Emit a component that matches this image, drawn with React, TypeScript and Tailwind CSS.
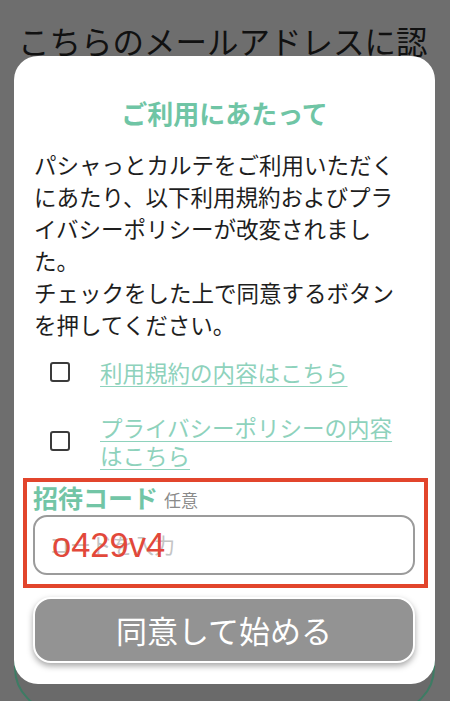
import React from "react";

const jp = { fontFamily: '"Noto Sans CJK JP", "Noto Sans", sans-serif' };

function CheckRow({ children, className = "" }: { children: React.ReactNode; className?: string }) {
  return (
    <div className={`flex items-center pr-4 ${className}`}>
      <div className="ml-4 h-5 w-5 shrink-0 rounded-[3px] border-2 border-[#3b3b3b] bg-white" />
      <a className="ml-[30px] text-[22.5px] leading-[28px] text-[#8ed2bc] underline decoration-1 underline-offset-[4px]">
        {children}
      </a>
    </div>
  );
}

export default function App() {
  return (
    <div className="relative h-[701px] w-[450px] overflow-hidden bg-[#6e6e6e]" style={jp}>
      {/* page behind the dialog */}
      <div className="px-[18px] pt-[20px] text-[31.5px] leading-[40px] text-[#111]">
        こちらのメールアドレスに認証コードを送信しました
      </div>
      <div className="absolute left-[14px] top-[600px] h-[112px] w-[421px] rounded-[44px] border-2 border-[#3d7c64] bg-[#6a6a6a]" />

      {/* dialog */}
      <div className="absolute left-[14px] top-[56px] flex h-[628px] w-[421px] flex-col rounded-[24px] bg-white px-5 pt-[41px]">
        <h2 className="text-center text-[26px] font-bold leading-[32px] text-[#6fc5a5]">ご利用にあたって</h2>

        <p className="mt-[19px] text-[22.5px] leading-[32px] text-[#1e1e1e]">
          パシャっとカルテをご利用いただくにあたり、以下利用規約およびプライバシーポリシーが改変されました。
          <br />
          チェックをした上で同意するボタンを押してください。
        </p>

        <CheckRow className="mt-[18px]">利用規約の内容はこちら</CheckRow>
        <CheckRow className="mt-[27px]">プライバシーポリシーの内容はこちら</CheckRow>

        <div className="mt-[14px] flex items-end">
          <span className="-ml-[1px] text-[25px] font-bold leading-[28px] text-[#72c5a6]">招待コード</span>
          <span className="mb-[1px] ml-[6px] text-[17px] leading-[20px] text-[#8a8a8a]">任意</span>
        </div>

        <div className="relative mt-[4px] -ml-[1px] flex h-[60px] items-center rounded-[14px] border-2 border-[#9b9b9b] px-[14px]">
          <span className="text-[21px] text-[#c4c4c4]">コードを入力</span>
          <span
            className="absolute left-[17px] top-[10px] text-[34.5px] leading-[36px] text-[#e2483a]"
            style={{ fontFamily: '"Liberation Sans", Arial, sans-serif' }}
          >
            o429v4
          </span>
        </div>

        <button className="mt-[22px] -ml-[1px] flex h-[66px] items-center justify-center rounded-[18px] border-2 border-white bg-[#939393] text-[31px] text-white shadow-[0_3px_6px_rgba(0,0,0,0.35)]">
          同意して始める
        </button>

        {/* annotation frame */}
        <div className="pointer-events-none absolute left-[9px] top-[422px] h-[110px] w-[405px] border-4 border-[#e2452c]" />
      </div>
    </div>
  );
}
